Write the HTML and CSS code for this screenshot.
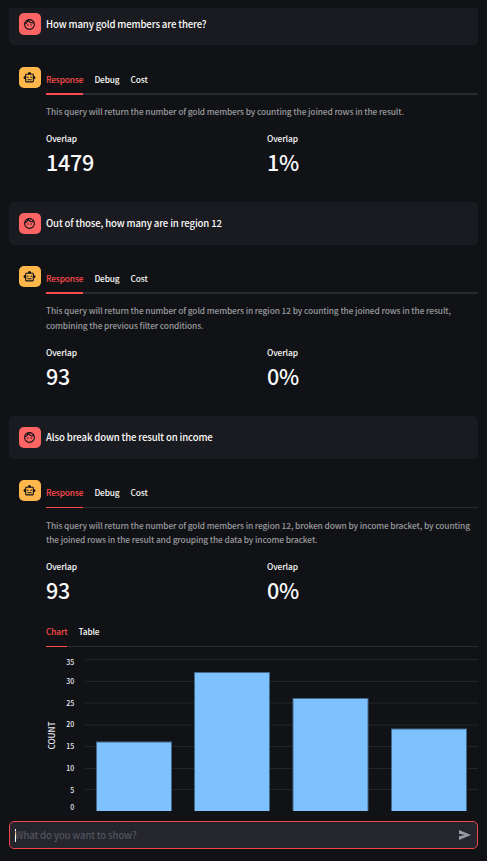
FILE: index.html
```html
<!DOCTYPE html>
<html lang="en">
<head>
<meta charset="utf-8">
<title>Chat</title>
<link rel="stylesheet" href="styles.css">
</head>
<body>
<svg class="defs" width="0" height="0" aria-hidden="true">
  <symbol id="face" viewBox="0 0 24 24"><path d="M10.25 13a1.25 1.25 0 1 1-2.5 0 1.25 1.25 0 0 1 2.5 0zM15 11.75a1.25 1.25 0 1 0 0 2.5 1.25 1.25 0 0 0 0-2.5zm7 .25c0 5.52-4.48 10-10 10S2 17.52 2 12 6.48 2 12 2s10 4.48 10 10zM10.66 4.12C12.06 6.44 14.6 8 17.5 8c.46 0 .91-.05 1.34-.12C17.44 5.56 14.9 4 12 4c-.46 0-.91.05-1.34.12zM4.42 9.47a8.046 8.046 0 0 0 3.66-4.44 8.046 8.046 0 0 0-3.66 4.44zM20 12c0-.78-.12-1.53-.33-2.24-.7.15-1.42.24-2.17.24a10 10 0 0 1-7.76-3.69A10.016 10.016 0 0 1 4 11.86c.01.04 0 .09 0 .14 0 4.41 3.59 8 8 8s8-3.59 8-8z"/></symbol>
  <symbol id="robot" viewBox="0 0 24 24"><path d="M20 9V7c0-1.1-.9-2-2-2h-3c0-1.66-1.34-3-3-3S9 3.34 9 5H6c-1.1 0-2 .9-2 2v2c-1.66 0-3 1.34-3 3s1.34 3 3 3v4c0 1.1.9 2 2 2h12c1.1 0 2-.9 2-2v-4c1.66 0 3-1.34 3-3s-1.34-3-3-3zm-2 10H6V7h12v12zm-9-6c-.83 0-1.5-.67-1.5-1.5S8.17 10 9 10s1.5.67 1.5 1.5S9.83 13 9 13zm7.500-1.500c0 .83-.67 1.500-1.500 1.500s-1.500-.67-1.500-1.500.67-1.500 1.500-1.500 1.500.67 1.500 1.500zM8 15h8v2H8v-2z"/></symbol>
</svg>
<main class="chat">
  <section class="message user first">
    <div class="avatar"><svg><use href="#face"/></svg></div>
    <p class="question">How many gold members are there?</p>
  </section>
  <section class="message bot">
    <div class="avatar"><svg><use href="#robot"/></svg></div>
    <div class="content">
      <nav class="tabs"><span class="tab active">Response</span><span class="tab">Debug</span><span class="tab">Cost</span></nav>
      <p class="summary raised">This query will return the number of gold members by counting the joined rows in the result.</p>
      <div class="metrics">
        <div><div class="label">Overlap</div><div class="value">1479</div></div>
        <div><div class="label">Overlap</div><div class="value">1%</div></div>
      </div>
    </div>
  </section>
  <section class="message user">
    <div class="avatar"><svg><use href="#face"/></svg></div>
    <p class="question">Out of those, how many are in region 12</p>
  </section>
  <section class="message bot">
    <div class="avatar"><svg><use href="#robot"/></svg></div>
    <div class="content">
      <nav class="tabs"><span class="tab active">Response</span><span class="tab">Debug</span><span class="tab">Cost</span></nav>
      <p class="summary raised">This query will return the number of gold members in region 12 by counting the joined rows in the result,<br>combining the previous filter conditions.</p>
      <div class="metrics">
        <div><div class="label">Overlap</div><div class="value">93</div></div>
        <div><div class="label">Overlap</div><div class="value">0%</div></div>
      </div>
    </div>
  </section>
  <section class="message user">
    <div class="avatar"><svg><use href="#face"/></svg></div>
    <p class="question">Also break down the result on income</p>
  </section>
  <section class="message bot">
    <div class="avatar"><svg><use href="#robot"/></svg></div>
    <div class="content">
      <nav class="tabs thin"><span class="tab active">Response</span><span class="tab">Debug</span><span class="tab">Cost</span></nav>
      <p class="summary">This query will return the number of gold members in region 12, broken down by income bracket, by counting<br>the joined rows in the result and grouping the data by income bracket.</p>
      <div class="metrics">
        <div><div class="label">Overlap</div><div class="value">93</div></div>
        <div><div class="label">Overlap</div><div class="value">0%</div></div>
      </div>
      <nav class="tabs thin chart-tabs"><span class="tab active">Chart</span><span class="tab">Table</span></nav>
      <svg class="chart" width="438" height="164" viewBox="40 647 438 164">
        <g class="grid">
          <path d="M85 659.5H478M85 681.5H478M85 746.5H478M85 768.5H478M85 789.5H478"/>
          <path class="soft" d="M85 703H478M85 725H478"/>
        </g>
        <g class="bars">
          <rect x="96.500" y="742" width="75" height="80"/>
          <rect x="194.500" y="672.500" width="75" height="150"/>
          <rect x="293" y="698.500" width="75" height="120"/>
          <rect x="391.500" y="729" width="75" height="90"/>
        </g>
        <g class="ticks">
          <text x="74.300" y="665.300">35</text>
          <text x="74.300" y="684.300">30</text>
          <text x="74.300" y="706.300">25</text>
          <text x="74.300" y="727.300">20</text>
          <text x="74.300" y="749.300">15</text>
          <text x="74.300" y="771.300">10</text>
          <text x="74.300" y="793.300">5</text>
          <text x="74.300" y="810.300">0</text>
        </g>
        <text class="axis" transform="translate(54.600 735.500) rotate(-90)">COUNT</text>
      </svg>
    </div>
  </section>
</main>
<footer class="composer">
  <span class="caret"></span><span class="placeholder">What do you want to show?</span>
  <svg class="send" width="12" height="10" viewBox="0 0 12 10"><path d="M0 0L12 5L0 10V6.300L6 5L0 3.700Z"/></svg>
</footer>
</body>
</html>
```
FILE: styles.css
```css
* { box-sizing: border-box; }
body {
  margin: 0;
  height: 861px;
  overflow: hidden;
  background: #111216;
  color: #fafafa;
  font-family: "Noto Sans CJK SC", "Noto Sans", sans-serif;
  font-weight: 500;
  font-size: 8.400px;
  letter-spacing: -0.110px;
}
p { margin: 0; }
.defs { display: block; }
.chat { height: 811px; padding: 8px 9px 0; overflow: hidden; }
.message { display: flex; gap: 5px; padding-left: 10px; }
.avatar {
  flex: none;
  width: 22px;
  height: 21px;
  border-radius: 5px;
  display: flex;
  align-items: center;
  justify-content: center;
}
.avatar svg { width: 13px; height: 13px; margin-right: 1px; fill: #111216; }
.user { height: 43px; padding-top: 11px; background: #1a1b20; border-radius: 5px; }
.user .avatar { background: #ff6464; }
.user.first { height: 37px; padding-top: 5px; border-radius: 0 0 5px 5px; }
.user.first .avatar { height: 22px; }
.question { font-size: 9.600px; line-height: 21px; letter-spacing: -0.140px; white-space: nowrap; }
.first .question { line-height: 23px; }
.bot { height: 157px; padding-top: 22px; }
.bot .avatar { background: #ffb74c; }
.user + .bot:nth-of-type(4) { height: 171px; padding-top: 21px; }
.user + .bot:nth-of-type(6) { height: 352px; padding-top: 21px; }
.content { flex: 1; min-width: 0; }
.tabs {
  display: flex;
  gap: 11px;
  height: 28px;
  border-bottom: 2px solid #292a2f;
  line-height: 24px;
}
.tab { height: 28px; letter-spacing: -0.150px; white-space: nowrap; }
.tab.active { color: #ff4b4b; border-bottom: 2px solid #ff4b4b; }
.tabs.thin { border-bottom-width: 1px; }
.thin .tab.active { border-bottom-width: 1px; }
.summary { margin-top: 10px; color: #999a9c; line-height: 14.400px; white-space: nowrap; }
.summary.raised { margin-top: 9px; line-height: 14.900px; }
.metrics { display: grid; grid-template-columns: 221px 1fr; margin-top: 11px; }
.raised + .metrics { margin-top: 11.500px; }
.label { line-height: 16px; }
.value { font-size: 21.500px; line-height: 31px; height: 32px; letter-spacing: -0.250px; }
.chart-tabs { margin-top: 13px; }
.chart { display: block; margin-left: -6px; letter-spacing: 0; }
.grid { stroke: #24252b; stroke-width: 1; }
.grid .soft { stroke: #1a1b20; stroke-width: 2; }
.bars { fill: #7dc1ff; stroke: #44688a; stroke-width: 1; }
.ticks { fill: #e6eaf1; font-size: 7px; text-anchor: end; }
.axis { fill: #e6eaf1; font-size: 8.200px; text-anchor: middle; }
.composer {
  margin: 10px 9px 0;
  height: 28px;
  padding: 0 6px 0 5px;
  display: flex;
  align-items: center;
  background: #24252d;
  border: 1px solid #f04848;
  border-radius: 5px;
}
.caret { width: 1px; height: 13px; background: #fff; }
.placeholder { margin-left: -1px; color: #53545d; font-size: 9.600px; line-height: 24px; letter-spacing: -0.150px; }
.send { margin-left: auto; fill: #9a9ba9; }
```
